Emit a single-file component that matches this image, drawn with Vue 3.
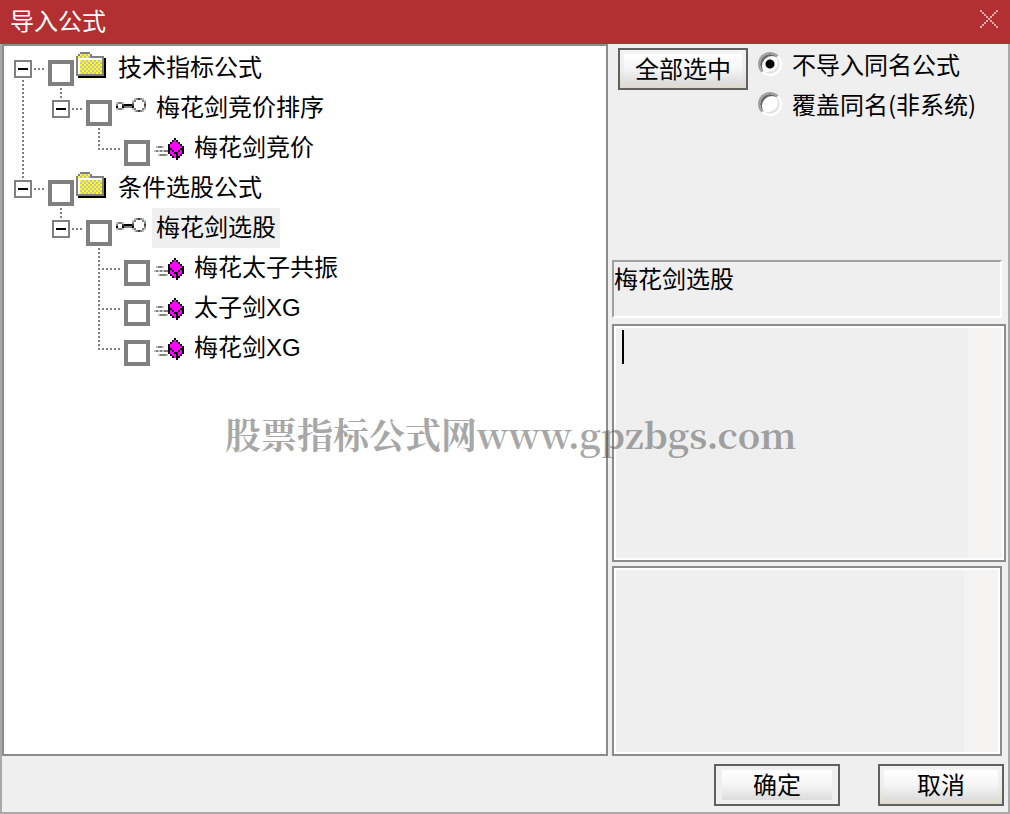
<script setup>
import { ref } from 'vue'

const rows = ref([
  { text: '技术指标公式', icon: 'folder', cells: ['root'] },
  { text: '梅花剑竞价排序', icon: 'key', cells: ['line', 'branch'] },
  { text: '梅花剑竞价', icon: 'gem', cells: ['line', 'blank', 'last'] },
  { text: '条件选股公式', icon: 'folder', cells: ['branch'] },
  { text: '梅花剑选股', icon: 'key', cells: ['blank', 'branch'], selected: true },
  { text: '梅花太子共振', icon: 'gem', cells: ['blank', 'blank', 'tee'] },
  { text: '太子剑XG', icon: 'gem', cells: ['blank', 'blank', 'tee'] },
  { text: '梅花剑XG', icon: 'gem', cells: ['blank', 'blank', 'last'] }
])

const mode = ref('skip')

/* Dotted guide segments of each tree cell */
const guides = {
  root: ['M13 32V40', 'M24 21H34'],
  branch: ['M13 0V10', 'M24 21H34'],
  line: ['M13 0V40'],
  blank: [],
  tee: ['M13 0V40', 'M16 21H34'],
  last: ['M13 0V22', 'M16 21H34']
}

/* Pixel icons: one character per 2px dot */
const palette = {
  k: '#000000',
  g: '#808080',
  l: '#c0c0c0',
  d: '#404040',
  y: '#ffff00',
  w: '#ffffff',
  m: '#ff00ff'
}
const art = {
  folder: [
    '..ggggg',
    '.gylylyg',
    'gylylylggggggg',
    'gwwwwwwwwwwwwgk',
    'gwylylylylylygk',
    'gwlylylylylylgk',
    'gwylylylylylygk',
    'gwlylylylylylgk',
    'gwylylylylylygk',
    'gwlylylylylylgk',
    'gwylylylylylygk',
    'ggggggggggggggk',
    '.kkkkkkkkkkkkkk'
  ],
  key: [
    '.........lgdgl',
    '........lg...gl',
    'lggl....g.....g',
    'g..dkkkkd.....d',
    'k..kggggk.....g',
    'lggl....lg...gl',
    '.........lgdgl'
  ],
  gem: [
    '..........k',
    '.........kmk',
    '........kmmmk',
    '.......kmmmmmk',
    '.lggl..kmmmmmmk',
    '.......kkmmmmkk',
    'lglglggkmkmmkmk',
    '.......kmmkkmmk',
    '..lgggl.kmmkmk',
    '.........kmkk',
    '...........k'
  ]
}
const dots = (name) =>
  art[name].flatMap((line, y) =>
    [...line].flatMap((c, x) => (c === '.' ? [] : [{ x, y, fill: palette[c] }]))
  )
const icons = { folder: dots('folder'), key: dots('key'), gem: dots('gem') }
const iconHeights = { folder: 13, key: 7, gem: 11 }
</script>

<template>
  <div class="dialog">
    <header class="title">
      <h1>导入公式</h1>
      <button class="close" type="button" aria-label="关闭">
        <svg viewBox="0 0 9 9" width="18" height="18" shape-rendering="crispEdges">
          <template v-for="i in 9" :key="i">
            <rect :x="i - 1" :y="i - 1" width="1" height="1" fill="#e0abac" />
            <rect :x="i - 1" :y="9 - i" width="1" height="1" fill="#e0abac" />
          </template>
        </svg>
      </button>
    </header>

    <main class="body">
      <ul class="tree">
        <li v-for="(row, n) in rows" :key="n" class="row">
          <svg
            v-for="(cell, c) in row.cells"
            :key="c"
            class="cell"
            viewBox="0 0 38 40"
            width="38"
            height="40"
            shape-rendering="crispEdges"
          >
            <path
              v-for="d in guides[cell]"
              :key="d"
              :d="d"
              stroke="#808080"
              stroke-width="2"
              stroke-dasharray="2 2"
            />
            <template v-if="cell === 'root' || cell === 'branch'">
              <rect x="5" y="13" width="16" height="16" fill="#fff" stroke="#808080" stroke-width="2" />
              <path d="M8 21H18" stroke="#000" stroke-width="2" />
            </template>
          </svg>
          <input :id="'node' + n" class="check" type="checkbox" />
          <label class="node" :for="'node' + n">
            <span class="icon" :class="row.icon">
              <svg
                :viewBox="'0 0 15 ' + iconHeights[row.icon]"
                width="30"
                :height="iconHeights[row.icon] * 2"
                shape-rendering="crispEdges"
              >
                <rect
                  v-for="(p, i) in icons[row.icon]"
                  :key="i"
                  :x="p.x"
                  :y="p.y"
                  width="1"
                  height="1"
                  :fill="p.fill"
                />
              </svg>
            </span>
            <span class="name" :class="{ selected: row.selected }">{{ row.text }}</span>
          </label>
        </li>
      </ul>

      <section class="side">
        <div class="options">
          <button class="btn warm" type="button">全部选中</button>
          <div class="radios">
            <label><input v-model="mode" type="radio" name="mode" value="skip" />不导入同名公式</label>
            <label><input v-model="mode" type="radio" name="mode" value="cover" />覆盖同名(非系统)</label>
          </div>
        </div>
        <div class="current">梅花剑选股</div>
        <textarea class="memo first" aria-label="公式说明"></textarea>
        <textarea class="memo second" aria-label="参数说明"></textarea>
      </section>
    </main>

    <footer class="foot">
      <button class="btn" type="button">确定</button>
      <button class="btn warm" type="button">取消</button>
    </footer>

    <div class="watermark">股票指标公式网www.gpzbgs.com</div>
  </div>
</template>

<style>
body {
  margin: 0;
}
</style>

<style scoped>
.dialog {
  position: relative;
  display: flex;
  flex-direction: column;
  min-height: 100vh;
  background: #efefef;
  color: #000;
  font: 24px/36px "Noto Sans CJK SC", sans-serif;
}
.dialog * {
  box-sizing: border-box;
}
.title {
  display: flex;
  justify-content: space-between;
  align-items: flex-start;
  height: 44px;
  padding: 0 12px 0 10px;
  background: #b22f32;
  color: #fff;
}
h1 {
  margin: 0;
  font-size: 24px;
  font-weight: 400;
  line-height: 40px;
}
.close {
  display: block;
  margin-top: 10px;
  padding: 0;
  border: 0;
  background: none;
}
.close svg,
.cell,
.icon svg {
  display: block;
  flex: none;
}
.body {
  flex: 1;
  display: grid;
  grid-template-columns: minmax(0, 1fr) 400px;
  border: solid #a9a9a9;
  border-width: 0 2px;
}
.tree {
  margin: 0;
  padding: 2px 6px;
  border: 2px solid #8c8c8c;
  background: #fff;
  list-style: none;
}
.row {
  display: flex;
  height: 40px;
}
.check {
  appearance: none;
  flex: none;
  width: 26px;
  height: 26px;
  margin: 12px 0 0;
  border: 4px solid #808080;
  background: #fff;
}
.node {
  display: flex;
  white-space: nowrap;
}
.icon {
  width: 40px;
  padding-left: 2px;
}
.icon.folder {
  padding-top: 4px;
}
.icon.key,
.icon.gem {
  padding-top: 10px;
  padding-left: 4px;
}
.name {
  padding: 0 4px;
  font-family: "Liberation Sans", "Noto Sans CJK SC", sans-serif;
  line-height: 40px;
}
.name.selected {
  background: #efefef;
}
.side {
  display: flex;
  flex-direction: column;
  padding: 0 2px 0 4px;
}
.options {
  display: flex;
  gap: 10px;
  min-height: 216px;
  padding: 4px 0 0 6px;
}
.btn {
  width: 126px;
  height: 42px;
  padding: 0 0 2px;
  border: 2px solid #606060;
  background:
    linear-gradient(#fff, #f5f5f5 50%, #dcdcdc) center / calc(100% - 12px) calc(100% - 8px) no-repeat,
    #efefef;
  color: #000;
  font: inherit;
}
.btn.warm {
  background:
    linear-gradient(#fff, #f5f5f5 50%, #dcdcdc) center / calc(100% - 8px) calc(100% - 8px) no-repeat,
    linear-gradient(#f4f4f2, #efeeeb 50%, #dedacf);
}
.options .btn {
  width: 130px;
}
.radios label {
  display: flex;
  align-items: flex-start;
  gap: 10px;
  height: 40px;
  line-height: 32px;
  white-space: nowrap;
}
.radios input {
  appearance: none;
  width: 24px;
  height: 24px;
  margin: 4px 0 0;
  border: 2px solid;
  border-color: #a0a0a0 #fff #fff #a0a0a0;
  border-radius: 50%;
  background: #fff;
  box-shadow: inset 2px 2px #696969, inset -2px -2px #e3e3e3;
}
.radios input:checked {
  background: radial-gradient(circle, #000 4px, #fff 5px);
}
.current {
  height: 58px;
  margin-right: 4px;
  border: 2px solid;
  border-color: #a0a0a0 #fff #fff #a0a0a0;
  line-height: 32px;
}
.memo {
  display: block;
  width: 100%;
  min-height: 0;
  margin: 0;
  padding: 4px 36px 4px 8px;
  border: 2px solid #8c8c8c;
  border-radius: 0;
  outline: 0;
  resize: none;
  font: inherit;
  box-shadow: inset 0 0 0 2px #fff;
}
.first {
  flex: 226 1 0;
  margin-top: 6px;
  background:
    linear-gradient(#000, #000) 8px 4px / 2px 34px no-repeat,
    linear-gradient(to left, #f4f3f1 36px, #efefef 36px);
}
.second {
  flex: 178 1 0;
  width: calc(100% - 4px);
  margin-top: 4px;
  background: linear-gradient(to left, #f4f3f1 36px, #efefef 36px);
}
.foot {
  display: flex;
  justify-content: flex-end;
  gap: 38px;
  padding: 8px 4px 6px;
  border: solid #a9a9a9;
  border-width: 0 2px 2px;
}
.watermark {
  position: absolute;
  top: 408px;
  left: 225px;
  color: rgba(80, 80, 80, 0.5);
  font: 700 36px/52px "Noto Serif CJK SC", "Noto Sans CJK SC", serif;
  white-space: nowrap;
  pointer-events: none;
}
</style>
